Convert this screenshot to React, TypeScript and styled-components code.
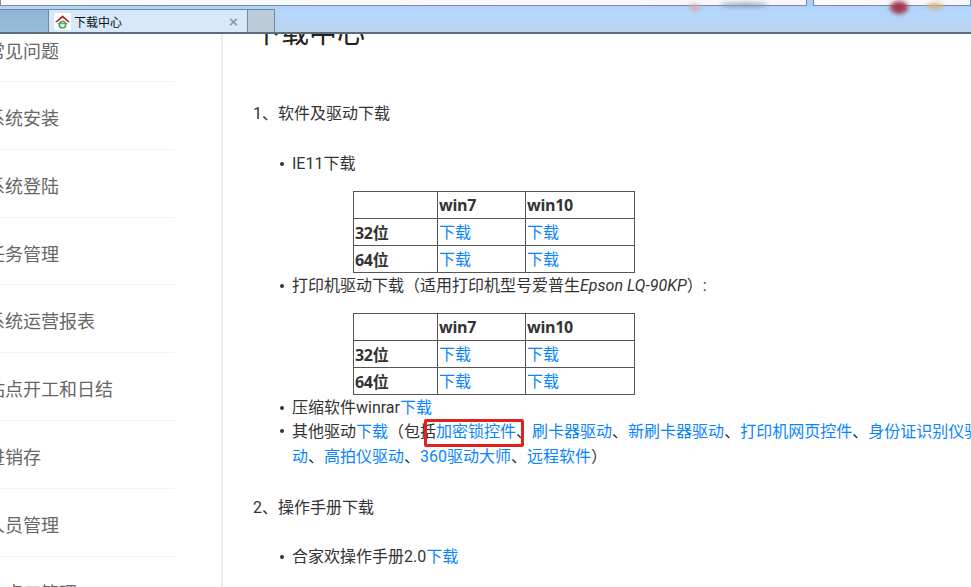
import styled, { createGlobalStyle } from 'styled-components';

const GlobalStyle = createGlobalStyle`
  html, body {
    margin: 0;
    padding: 0;
    background: #fff;
  }
`;

const ScPage = styled.div`
  width: 971px;
  height: 587px;
  overflow: hidden;
  display: grid;
  grid-template-rows: 34px 1fr;
  font-family: Roboto, "Noto Sans CJK SC", sans-serif;
  font-size: 16px;
  color: #333;
`;

const ScChrome = styled.header`
  position: relative;
  overflow: hidden;
  display: flex;
  flex-direction: column;
  background: linear-gradient(#a9cdf2 0, #b4d7fd 12px, #b8d3ee 30px);
  border-bottom: 2px solid #5d6a78;
  box-sizing: border-box;
`;

const ScAddressRow = styled.div`
  display: flex;
  gap: 6px;
  height: 6px;
`;

const ScAddressBox = styled.div<{ $width: number }>`
  width: ${(p) => p.$width}px;
  flex: none;
  background: linear-gradient(90deg, #fafbfc, #f5f7fb);
  border: 1px solid #7d8ca0;
  border-top: 0;
  box-sizing: border-box;
`;

const ScBlur = styled.i<{ $x: number; $y: number; $w: number; $h: number; $color: string }>`
  position: absolute;
  left: ${(p) => p.$x}px;
  top: ${(p) => p.$y}px;
  width: ${(p) => p.$w}px;
  height: ${(p) => p.$h}px;
  border-radius: 50%;
  background: ${(p) => p.$color};
  filter: blur(2px);
`;

const ScTabs = styled.div`
  display: flex;
  margin-top: 3px;
  height: 23px;
`;

const ScTabStub = styled.div`
  width: 48px;
  background: linear-gradient(#8fb5d6, #9abbd8);
  border-top: 1px solid #74879a;
  box-sizing: border-box;
`;

const ScTab = styled.div`
  width: 200px;
  display: flex;
  align-items: center;
  padding: 0 5px;
  gap: 3px;
  background: #d6e8f9;
  border: 1px solid #74879a;
  border-bottom: 0;
  box-sizing: border-box;
  font-size: 12px;
  color: #111;
`;

const ScFavicon = styled.svg`
  width: 17px;
  height: 17px;
  flex: none;
`;

const ScTabTitle = styled.span`
  flex: 1;
`;

const ScClose = styled.span`
  color: #8b929a;
  font-family: "DejaVu Sans", sans-serif;
  font-size: 13px;
  font-weight: bold;
  margin-right: 3px;
`;

const ScNewTab = styled.div`
  width: 27px;
  background: #bccbd9;
  border: 1px solid #74879a;
  border-left: 0;
  border-bottom: 0;
  box-sizing: border-box;
`;

const ScBody = styled.div`
  display: flex;
  overflow: hidden;
`;

const ScSidebar = styled.nav`
  width: 223px;
  flex: none;
  border-right: 2px solid #eee;
  box-sizing: border-box;
  overflow: hidden;
`;

const ScSideItem = styled.div`
  width: 187px;
  height: 67.8px;
  margin-left: -13px;
  padding-top: 20px;
  box-sizing: border-box;
  border-bottom: 1px dotted #e4e4e4;
  font-size: 18px;
  line-height: 34px;
  color: #666;
  &:first-child {
    height: 48px;
    padding-top: 1px;
  }
`;

const ScMain = styled.main`
  flex: 1;
  min-width: 0;
  padding-left: 30px;
`;

const ScTitle = styled.h1`
  margin: -18px 0 0;
  font-size: 28px;
  font-weight: 400;
  line-height: 36px;
  color: #222;
`;

const ScSection = styled.p`
  margin: 0;
  line-height: 24px;
`;

const ScFirstSection = styled(ScSection)`
  margin-top: 50px;
`;

const ScList = styled.ul<{ $gap: number }>`
  width: 699px;
  margin: ${(p) => p.$gap}px 0 0;
  padding: 0 0 0 39px;
  line-height: 24px;
  list-style: none;
`;

const ScItem = styled.li<{ $tall?: boolean }>`
  position: relative;
  line-height: ${(p) => (p.$tall ? 25 : 24)}px;
  margin-top: ${(p) => (p.$tall ? -1 : 0)}px;
  &::before {
    content: '';
    position: absolute;
    left: -12px;
    top: 10px;
    width: 4px;
    height: 4px;
    border-radius: 50%;
    background: #333;
  }
`;

const ScLink = styled.a`
  color: #0a84ff;
  text-decoration: none;
`;

const ScTable = styled.table`
  border-collapse: collapse;
  width: 281px;
  margin: 15px 0 1px 61px;
  table-layout: fixed;
  line-height: 24px;
  & td {
    border: 1px solid #555;
    padding: 1px;
    height: 24px;
  }
  & tr + tr td {
    padding: 2px 1px 0;
  }
`;

const ScHead = styled.td`
  font-family: "Open Sans", "Noto Sans CJK SC", sans-serif;
  font-weight: 700;
  letter-spacing: -0.3px;
`;

const ScRedBox = styled.span`
  position: absolute;
  left: 132px;
  top: 0;
  width: 100px;
  height: 28px;
  box-sizing: border-box;
  border: 3px solid #e3211c;
  border-radius: 2px;
`;

const ScSecondSection = styled(ScSection)`
  margin-top: 27px;
`;

const menu = ['常见问题', '系统安装', '系统登陆', '任务管理', '系统运营报表', '站点开工和日结', '进销存', '人员管理', '站点工管理'];
const otherLinks = ['刷卡器驱动', '新刷卡器驱动', '打印机网页控件', '身份证识别仪驱动', '高拍仪驱动', '360驱动大师', '远程软件'];

const DownloadTable = () => (
  <ScTable>
    <colgroup>
      <col style={{ width: 84 }} />
      <col style={{ width: 88 }} />
      <col style={{ width: 109 }} />
    </colgroup>
    <tbody>
      <tr>
        <td />
        <ScHead>win7</ScHead>
        <ScHead>win10</ScHead>
      </tr>
      {['32位', '64位'].map((bit) => (
        <tr key={bit}>
          <ScHead>{bit}</ScHead>
          <td><ScLink>下载</ScLink></td>
          <td><ScLink>下载</ScLink></td>
        </tr>
      ))}
    </tbody>
  </ScTable>
);

export default function App() {
  return (
    <ScPage>
      <GlobalStyle />
      <ScChrome>
        <ScAddressRow>
          <ScAddressBox $width={807} />
          <ScAddressBox $width={158} />
        </ScAddressRow>
        <ScBlur $x={690} $y={4} $w={10} $h={7} $color="#d9a8ac" />
        <ScBlur $x={720} $y={3} $w={48} $h={4} $color="#8c9db3" />
        <ScBlur $x={890} $y={1} $w={18} $h={13} $color="#a33a50" />
        <ScBlur $x={927} $y={3} $w={16} $h={6} $color="#d9b070" />
        <ScTabs>
          <ScTabStub />
          <ScTab>
            <ScFavicon viewBox="0 0 16 16">
              <rect width="16" height="16" rx="1.5" fill="#fff" />
              <path d="M1 8.4 8 2l7 6.4-1.8.3L8 4.4 2.8 8.7Z" fill="#c3202b" />
              <path d="M3.5 9.6h9v1h-9Z" fill="#3f9c5f" />
              <circle cx="8" cy="11" r="3" fill="none" stroke="#3f9c5f" strokeWidth="1.4" />
            </ScFavicon>
            <ScTabTitle>下载中心</ScTabTitle>
            <ScClose>×</ScClose>
          </ScTab>
          <ScNewTab />
        </ScTabs>
      </ScChrome>
      <ScBody>
        <ScSidebar>
          {menu.map((name) => (
            <ScSideItem key={name}>{name}</ScSideItem>
          ))}
        </ScSidebar>
        <ScMain>
          <ScTitle>下载中心</ScTitle>
          <ScFirstSection>1、软件及驱动下载</ScFirstSection>
          <ScList $gap={26}>
            <ScItem>
              IE11下载
              <DownloadTable />
            </ScItem>
            <ScItem>
              打印机驱动下载（适用打印机型号爱普生<em>Epson LQ-90KP</em>）:
              <DownloadTable />
            </ScItem>
            <ScItem>
              压缩软件winrar<ScLink>下载</ScLink>
            </ScItem>
            <ScItem $tall>
              其他驱动<ScLink>下载</ScLink>（包括<ScLink>加密锁控件</ScLink>、
              {otherLinks.map((name, i) => (
                <span key={name}>
                  <ScLink>{name}</ScLink>
                  {i < otherLinks.length - 1 ? '、' : ''}
                </span>
              ))}
              ）
              <ScRedBox />
            </ScItem>
          </ScList>
          <ScSecondSection>2、操作手册下载</ScSecondSection>
          <ScList $gap={25}>
            <ScItem>
              合家欢操作手册2.0<ScLink>下载</ScLink>
            </ScItem>
          </ScList>
        </ScMain>
      </ScBody>
    </ScPage>
  );
}
